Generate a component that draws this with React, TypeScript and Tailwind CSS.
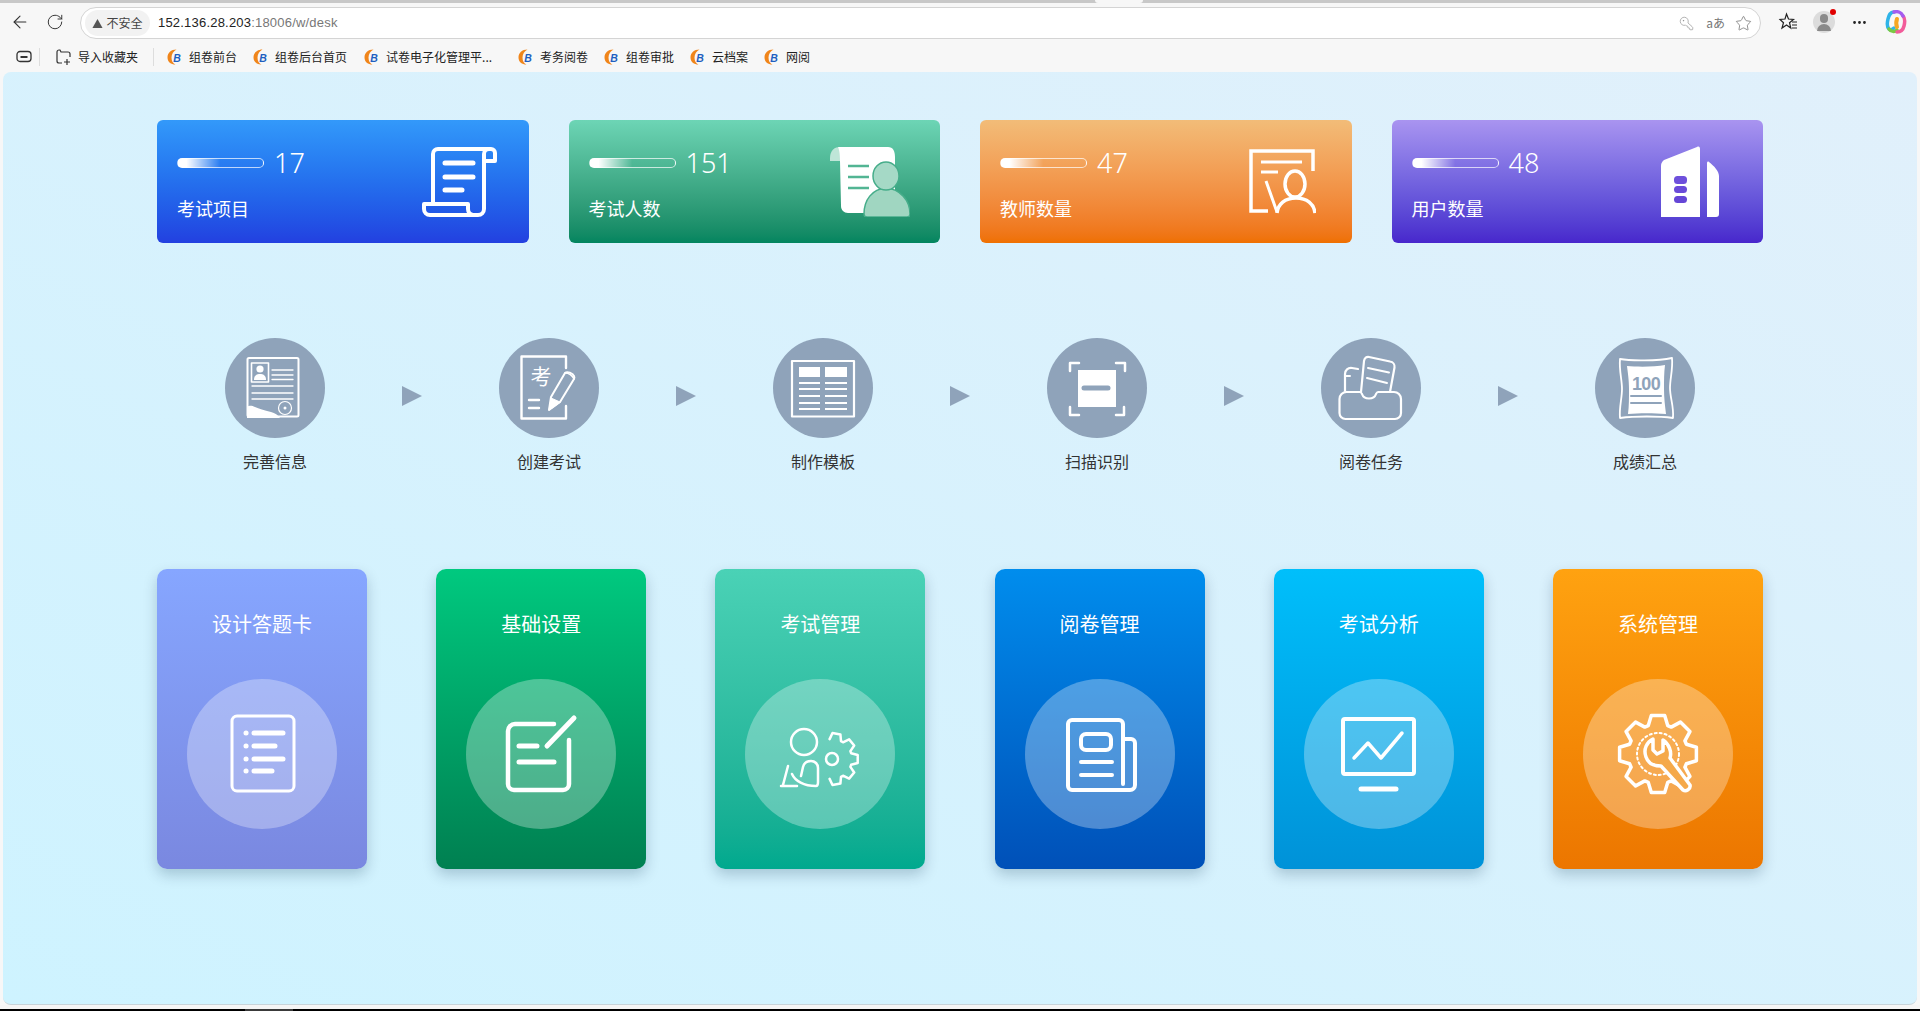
import React from "react";
import { ArrowLeft, RotateCw, KeyRound, Star, MoreHorizontal } from "lucide-react";

const gear = (cx: number, cy: number, ro: number, ri: number, n: number, from = 0, to = 360) => {
  const pts: string[] = [];
  const step = 360 / n;
  for (let a = from; a < to - 0.01; a += step) {
    const seq: [number, number][] = [
      [a - step * 0.42, ri],
      [a - step * 0.22, ro],
      [a + step * 0.22, ro],
      [a + step * 0.42, ri],
    ];
    for (const [deg, r] of seq) {
      const t = (deg * Math.PI) / 180;
      pts.push(`${(cx + r * Math.cos(t)).toFixed(1)} ${(cy + r * Math.sin(t)).toFixed(1)}`);
    }
  }
  return "M" + pts.join(" L");
};

const S = (p: React.SVGProps<SVGSVGElement>) => (
  <svg fill="none" stroke="white" strokeLinecap="round" strokeLinejoin="round" {...p} />
);

const ScrollIcon = () => (
  <S width={75} height={70} viewBox="0 0 75 70" strokeWidth={4} className="mr-[32px] shrink-0">
    <path d="M11 55V7a5 5 0 0 1 5-5h53a4 4 0 0 1 4 4v8H62V7a5 5 0 0 1 5-5M62 14v48a6 6 0 0 1-6 6H8a6 6 0 0 1-6-6v-5h44v5a6 6 0 0 0 5 6" />
    <path d="M23 16h28M23 30h28M23 43h17" strokeWidth={5} />
  </S>
);
const PaperPersonIcon = () => (
  <svg width={80} height={70} viewBox="0 0 80 70" className="mr-[30px] shrink-0">
    <path d="M0 11C0 3 5 0 10 0s7 4 7 14H0Z" fill="#bfe6d8" />
    <path d="M10 0h48c5 0 7 4 7 10v50c0 4-3 6-6 6H18c-4 0-7-3-7-7L10 14C10 6 9 2 8 0Z" fill="white" />
    <path d="M18 19h21M18 30h21M18 41h21" stroke="#52b593" strokeWidth={2.5} />
    <path d="M34 67c0-14 8-25 22-26 14 1 24 12 24 26 0 2-1 3-3 3H37c-2 0-3-1-3-3Z" fill="#a0d6c1" stroke="#46ad8a" strokeWidth={1.5} />
    <ellipse cx="56" cy="29" rx="13" ry="14" fill="#a5d9c6" stroke="#46ad8a" strokeWidth={1.5} />
  </svg>
);
const TeacherIcon = () => (
  <svg width={67} height={65} viewBox="0 0 67 65" fill="none" stroke="white" strokeWidth={3.5} className="mr-[36px] shrink-0">
    <path d="M19 62H2V2h62v20" />
    <path d="M12 13h41M12 23h17M17 32l11 31" strokeWidth={3} />
    <ellipse cx="46" cy="35" rx="10" ry="13" />
    <path d="M28 64c1-9 8-15 19-15s18 6 19 15" />
  </svg>
);
const BuildingIcon = () => (
  <svg width={58} height={71} viewBox="0 0 58 71" className="mr-[44px] shrink-0">
    <path d="M0 71V20c0-3 1-4 3-6L36 1c2-1 3 0 3 2v68Z" fill="white" />
    <path d="M46 71V17c0-1 1-2 2-1 5 4 10 9 10 14v38c0 2-1 3-3 3Z" fill="white" />
    <rect x="13" y="30" width="13" height="8" rx="3.5" fill="#6e50dc" />
    <rect x="13" y="40" width="13" height="7" rx="3.5" fill="#6a4bd9" />
    <rect x="13" y="50" width="13" height="7" rx="3.5" fill="#6546d6" />
  </svg>
);

const stats = [
  { n: "17", label: "考试项目", cls: "from-[#3399fa] to-[#2340e0]", Icon: ScrollIcon },
  { n: "151", label: "考试人数", cls: "from-[#6dd5b5] to-[#02855f]", Icon: PaperPersonIcon },
  { n: "47", label: "教师数量", cls: "from-[#f2bc78] to-[#ef7000]", Icon: TeacherIcon },
  { n: "48", label: "用户数量", cls: "from-[#a994f0] to-[#4826cc]", Icon: BuildingIcon },
];

const Step1 = () => (
  <>
    <rect x="22.5" y="20" width="51" height="58.5" rx="1.5" strokeWidth={2} />
    <rect x="26.5" y="25" width="17" height="19" strokeWidth={1.6} />
    <circle cx="35" cy="31" r="3.6" fill="white" stroke="none" />
    <path d="M29 42c0-5 3-6 6-6s6 1 6 6Z" fill="white" stroke="none" />
    <path d="M47 32h21M47 37h21M47 41.500h21M27 48h41M27 55h41M27 61h41" strokeWidth={1.3} />
    <circle cx="60" cy="70" r="6.500" strokeWidth={1.2} />
    <circle cx="60" cy="70" r="1.500" fill="white" stroke="none" />
    <path d="M22 80V69c3-2 5-1 8 0 4 2 9 3 16 5 4 1 7 3 9 6Z" fill="white" stroke="none" />
  </>
);
const Step2 = () => (
  <>
    <path d="M67 30V18.500H22.500V80.500H67V68" strokeWidth={2.4} />
    <text x="42" y="46" fontSize="21" fill="white" stroke="none" textAnchor="middle" fontFamily="'Noto Sans CJK SC', sans-serif">考</text>
    <path d="M30 62h10M30 70h10" strokeWidth={2.4} />
    <path d="M50 72l2-13 14-24c2-2 8 0 9 3 .5 1 .5 2 0 3L61 64Z" strokeWidth={2} />
    <path d="M50 72l2-12 9 4Z" fill="white" strokeWidth={1} />
    <path d="M66 35c3 0 7 2 9 6" strokeWidth={1.500} />
  </>
);
const Step3 = () => (
  <>
    <rect x="19" y="23" width="62" height="55.500" strokeWidth={2.200} strokeLinecap="butt" />
    <rect x="26" y="29" width="21" height="10" fill="white" stroke="none" />
    <rect x="52" y="29" width="22" height="10" fill="white" stroke="none" />
    <path d="M26 45h21M52 45h22M26 51h21M52 51h22M26 58h21M52 58h22M26 65h21M52 65h22M26 71h21M52 71h22" strokeWidth={2.200} strokeLinecap="butt" />
  </>
);
const Step4 = () => (
  <>
    <path d="M23 33v-8h9M69 25h9v8M23 69v8h9M69 77h8v-8" strokeWidth={2.500} />
    <rect x="31" y="32" width="38" height="37" fill="white" stroke="none" />
    <path d="M37 50h24" stroke="#8fa3ba" strokeWidth={5} />
  </>
);
const Step5 = () => (
  <>
    <path d="M18.500 61a7 7 0 0 1 7-7H39c1 0 1.500 1 2 2 1 3 4 4.500 7 4.500s6-1.500 7-4.500c.5-1 1-2 2-2h16a7 7 0 0 1 7 7v14a6 6 0 0 1-6 6H24.500a6 6 0 0 1-6-6Z" strokeWidth={2.200} />
    <path d="M37 31l-6-1c-4-.5-7 2-7 6v17" strokeWidth={2.200} />
    <path d="M40 54l3-31c.5-3 2.500-4.500 5-4l21 4.500c3 .5 5 3 4.500 6L69 54" strokeWidth={2.200} />
    <path d="M47 30l21 4.500M46 40l20 5M25 38h4" strokeWidth={2} />
  </>
);
const Step6 = () => (
  <>
    <path d="M25 21c10 2 38 2 52-1 1 12-2 20-2 30s4 18 3 30c-14-2-38-2-53 0-1-11 2-19 2-29s-3-18-2-30Z" strokeWidth={1.800} />
    <path d="M32 28c10 1 28 1 38-1-1 8-1 15-1 24s1 17 2 25c-12-1-27-1-38 0 1-8 1-16 1-25s-1-15-2-23Z" fill="white" stroke="none" />
    <text x="51" y="51.500" fontSize="18" fontWeight="700" fill="#8fa3ba" stroke="none" textAnchor="middle" fontFamily="'Liberation Sans', sans-serif" letterSpacing="-0.6">100</text>
    <path d="M36 58h30M36 65h30" stroke="#8fa3ba" strokeWidth={2} />
  </>
);

const steps = [
  { t: "完善信息", I: Step1 },
  { t: "创建考试", I: Step2 },
  { t: "制作模板", I: Step3 },
  { t: "扫描识别", I: Step4 },
  { t: "阅卷任务", I: Step5 },
  { t: "成绩汇总", I: Step6 },
];

const B1 = () => (
  <>
    <rect x="45" y="37" width="62" height="75" rx="5" strokeWidth={3} />
    <path d="M59 54h.1M59 67h.1M59 80h.1M59 92h.1" strokeWidth={5} />
    <path d="M67 54h29M67 67h21M67 80h29M67 92h18" strokeWidth={5} />
  </>
);
const B2 = () => (
  <>
    <path d="M88 45H49a7 7 0 0 0-7 7v53a6 6 0 0 0 6 6h49a6 6 0 0 0 6-6V61" strokeWidth={4.500} />
    <path d="M81 67l27-28" strokeWidth={5} />
    <path d="M53 67h18M53 83h35" strokeWidth={5} />
  </>
);
const B3 = () => (
  <>
    <ellipse cx="59" cy="63" rx="13" ry="13" strokeWidth={2.500} />
    <path d={gear(87, 80, 26, 20, 9, -80, 90)} strokeWidth={2.500} />
    <ellipse cx="87" cy="80" rx="6" ry="6" strokeWidth={2.500} />
    <path d="M36 107h16M38 106l5-19" strokeWidth={2.500} />
    <path d="M47 95c3 7 12 12 24 12 2 0 2-2 2-4V89c0-4-3-7-7-7-4 0-7 2-8 6l-2 9" strokeWidth={2.500} />
  </>
);
const B4 = () => (
  <>
    <path d="M98 105V45a4 4 0 0 0-4-4H47a4 4 0 0 0-4 4v62a4 4 0 0 0 4 4h58a5 5 0 0 0 5-5V64a4 4 0 0 0-4-4H98" strokeWidth={4} />
    <rect x="56" y="55" width="30" height="16" rx="5" strokeWidth={4} />
    <path d="M56 83h31M56 96h31" strokeWidth={4} />
  </>
);
const B5 = () => (
  <>
    <rect x="39" y="40" width="71" height="55" rx="2" strokeWidth={4} />
    <path d="M50 79l14-15 13 15 21-25" strokeWidth={3.500} />
    <path d="M57 110h35" strokeWidth={5} />
  </>
);
const B6 = () => (
  <>
    <path d={gear(75, 75, 39, 30, 8, 0, 360) + "Z"} strokeWidth={3.500} />
    <circle cx="75" cy="75" r="21" strokeWidth={2} strokeDasharray="2 3" />
    <path d="M70 60c-6 3-10 10-7 18 2 6 8 9 15 9l22 24c3 2 8-1 7-5L87 79c2-6-1-14-7-18v11l-6 3-4-4Z" fill="#f5a94a" strokeWidth={3.500} />
  </>
);

const modules = [
  { t: "设计答题卡", cls: "from-[#86a6ff] to-[#7a88e0]", I: B1 },
  { t: "基础设置", cls: "from-[#00c97f] to-[#008051]", I: B2 },
  { t: "考试管理", cls: "from-[#4ad2b6] to-[#00a98e]", I: B3 },
  { t: "阅卷管理", cls: "from-[#008ded] to-[#0050b8]", I: B4 },
  { t: "考试分析", cls: "from-[#00bffb] to-[#0092d8]", I: B5 },
  { t: "系统管理", cls: "from-[#ffa210] to-[#ec7600]", I: B6 },
];

const BookmarkLogo = () => (
  <svg width={16} height={16} viewBox="0 0 16 16" className="shrink-0">
    <path d="M9.500 .5C4 .5 .5 4 .5 8.500S4 15.500 8.500 15.500C6 14.500 4.500 12 4.500 8.500S6.500 2 9.500 .5Z" fill="#f0851a" />
    <text x="10" y="12.500" fontSize="10.500" fontWeight="700" fontStyle="italic" fill="#1f5fbf" textAnchor="middle" fontFamily="'Liberation Sans', sans-serif">B</text>
  </svg>
);

const bookmarks = [
  { t: "组卷前台", m: "mr-[16px]" },
  { t: "组卷后台首页", m: "mr-[17px]" },
  { t: "试卷电子化管理平...", m: "mr-[26px]" },
  { t: "考务阅卷", m: "mr-[16px]" },
  { t: "组卷审批", m: "mr-[16px]" },
  { t: "云档案", m: "mr-[16px]" },
  { t: "网阅", m: "" },
];

export default function App() {
  return (
    <div className="h-screen w-full flex flex-col overflow-hidden bg-[#f7f7f7] font-['Noto_Sans_CJK_SC','Microsoft_YaHei',sans-serif]">
      {/* window top strip */}
      <div className="h-[3px] bg-[#c8c8c8] flex shrink-0">
        <div className="ml-[1095px] w-[48px] bg-[#f7f7f7] rounded-b-sm" />
      </div>

      {/* toolbar */}
      <div className="h-[38px] shrink-0 flex items-center text-[#333]">
        <ArrowLeft className="ml-[10px] text-[#333]" size={20} strokeWidth={1.3} />
        <RotateCw className="ml-[16px] text-[#333]" size={18} strokeWidth={1.3} />
        <div className="ml-[16px] w-[1681px] h-[32px] mt-[2px] rounded-full bg-white border border-[#d4d4d4] flex items-center pl-[4px] pr-[8px]">
          <div className="h-[26px] w-[65px] rounded-full bg-[#f2f2f2] flex items-center justify-center gap-[3px] text-[12px] text-[#444]">
            <svg width={11} height={11} viewBox="0 0 12 12">
              <path d="M6 1l5.500 10H.5Z" fill="#555" />
            </svg>
            不安全
          </div>
          <div className="ml-[8px] text-[13px] tracking-[0.2px] font-['Liberation_Sans',sans-serif] text-[#222]">
            152.136.28.203<span className="text-[#777]">:18006/w/desk</span>
          </div>
          <div className="ml-auto flex items-center text-[#888]">
            <KeyRound size={15} strokeWidth={1} className="-scale-x-100" />
            <span className="ml-[12px] text-[12px] whitespace-nowrap text-[#777]">aあ</span>
            <Star size={17} strokeWidth={1} className="ml-[10px] text-[#666]" />
          </div>
        </div>
        <svg width={20} height={20} viewBox="0 0 20 20" fill="none" stroke="#222" strokeWidth={1.2} className="ml-[17px]">
          <path d="M8.500 2l2 5 5 .5-4 3.200 1.300 5.300-4.300-3-4.500 3 1.500-5.300L2 7.500l5-.5Z" />
          <path d="M14 10h5M14 13h5M14 16h5" />
        </svg>
        <div className="relative ml-[15px] w-[22px] h-[22px] rounded-full bg-[#dcdcdc] overflow-visible flex flex-col items-center justify-center">
          <div className="w-[8px] h-[9px] rounded-full bg-[#8a8a8a]" />
          <div className="w-[14px] h-[7px] rounded-t-full bg-[#8a8a8a] mt-[1px]" />
          <div className="absolute -top-[2px] -right-[1px] w-[6px] h-[6px] rounded-full bg-[#e00000]" />
        </div>
        <MoreHorizontal size={17} strokeWidth={2} className="ml-[16px] text-[#222]" />
        <svg width={22} height={24} viewBox="0 0 22 24" fill="none" className="ml-[17px]">
          <path d="M9 2C5 2 4 5 3 9c-1 4-1 8 1 10 1 1 3 1 5-1" stroke="#2fb4e8" strokeWidth={3.500} strokeLinecap="round" />
          <path d="M4 19c2 3 6 3 8 1" stroke="#7ac943" strokeWidth={3.500} strokeLinecap="round" />
          <path d="M12 22c3 0 6-2 7-6 1-4 1-8-1-10" stroke="#f25c9a" strokeWidth={3.500} strokeLinecap="round" />
          <path d="M9 2c3-1 7 0 9 4" stroke="#a45cf0" strokeWidth={3.500} strokeLinecap="round" />
          <path d="M12 9c-1 3-1 6 0 8" stroke="#f5a623" strokeWidth={4} strokeLinecap="round" />
        </svg>
      </div>

      {/* bookmarks */}
      <div className="h-[31px] shrink-0 flex items-center text-[12px] text-[#222] pl-[16px]">
        <svg width={16} height={14} viewBox="0 0 16 14" fill="none" stroke="#333" strokeWidth={1.300}>
          <rect x="1" y="1.500" width="14" height="10" rx="3" />
          <path d="M4.500 7h7" strokeWidth={2} />
        </svg>
        <div className="ml-[7px] w-px h-[18px] bg-[#ddd]" />
        <svg width={18} height={17} viewBox="0 0 18 17" fill="none" stroke="#333" strokeWidth={1.200} className="ml-[14px]">
          <path d="M3 13V4a2 2 0 0 1 2-2h1l1 2h7a2 2 0 0 1 2 2v3M3 13a2 2 0 0 0 2 2h3" />
          <path d="M10 14h6M13 11v6" />
        </svg>
        <span className="ml-[6px]">导入收藏夹</span>
        <div className="ml-[15px] w-px h-[18px] bg-[#ddd]" />
        <div className="ml-[13px] flex items-center">
          {bookmarks.map((b) => (
            <div key={b.t} className={`flex items-center ${b.m}`}>
              <BookmarkLogo />
              <span className="ml-[6px] whitespace-nowrap">{b.t}</span>
            </div>
          ))}
        </div>
      </div>

      {/* page content */}
      <div className="flex-1 min-h-0 mx-[3px] rounded-[8px] border-b border-[#c8d4da] bg-linear-to-bl from-[#e1f0fb] to-[#cef3ff] overflow-hidden">
        <div className="w-[1606px] pt-[48px] ml-[154px]">
          {/* stats */}
          <div className="flex justify-between">
            {stats.map(({ n, label, cls, Icon }) => (
              <div key={label} className={`w-[371.5px] h-[123px] rounded-[6px] bg-linear-to-b ${cls} flex items-center justify-between text-white`}>
                <div className="pl-[20px] mt-[5px] flex flex-col">
                  <div className="flex items-center gap-[10px] h-[30px]">
                    <div className="w-[87px] h-[10px] rounded-full border border-white/70 bg-linear-to-r from-white from-10% to-transparent to-50%" />
                    <span className="text-[27px] leading-[30px] font-['Noto_Sans',sans-serif] font-light">{n}</span>
                  </div>
                  <div className="mt-[17px] text-[18px] leading-[26px]">{label}</div>
                </div>
                <Icon />
              </div>
            ))}
          </div>

          {/* process */}
          <div className="mt-[95px] flex justify-center items-start gap-[77px]">
            {steps.map(({ t, I }, i) => (
              <React.Fragment key={t}>
                {i > 0 && (
                  <div className="mt-[48px] w-0 h-0 border-y-[10px] border-l-[20px] border-y-transparent border-l-[#8fa3ba]" />
                )}
                <div className="w-[100px] flex flex-col items-center">
                  <div className="w-[100px] h-[100px] rounded-full bg-[#8fa3ba]">
                    <S width={100} height={100} viewBox="0 0 100 100">
                      <I />
                    </S>
                  </div>
                  <div className="mt-[11px] text-[16px] leading-[24px] text-[#333] whitespace-nowrap">{t}</div>
                </div>
              </React.Fragment>
            ))}
          </div>

          {/* modules */}
          <div className="mt-[96px] flex justify-between">
            {modules.map(({ t, cls, I }) => (
              <div key={t} className={`w-[210px] h-[300px] rounded-[10px] bg-linear-to-b ${cls} shadow-[0_6px_14px_rgba(0,40,70,0.22)] flex flex-col items-center text-white`}>
                <div className="mt-[41px] text-[20px] leading-[28px] whitespace-nowrap">{t}</div>
                <div className="mt-[41px] w-[150px] h-[150px] rounded-full bg-white/30">
                  <S width={150} height={150} viewBox="0 0 150 150">
                    <I />
                  </S>
                </div>
              </div>
            ))}
          </div>
        </div>
      </div>

      {/* window bottom */}
      <div className="h-[4px] shrink-0 bg-[#f5f5f5]" />
      <div className="h-[2px] shrink-0 bg-black flex">
        <div className="ml-[245px] w-[48px] bg-[#3a3a3a]" />
      </div>
    </div>
  );
}
